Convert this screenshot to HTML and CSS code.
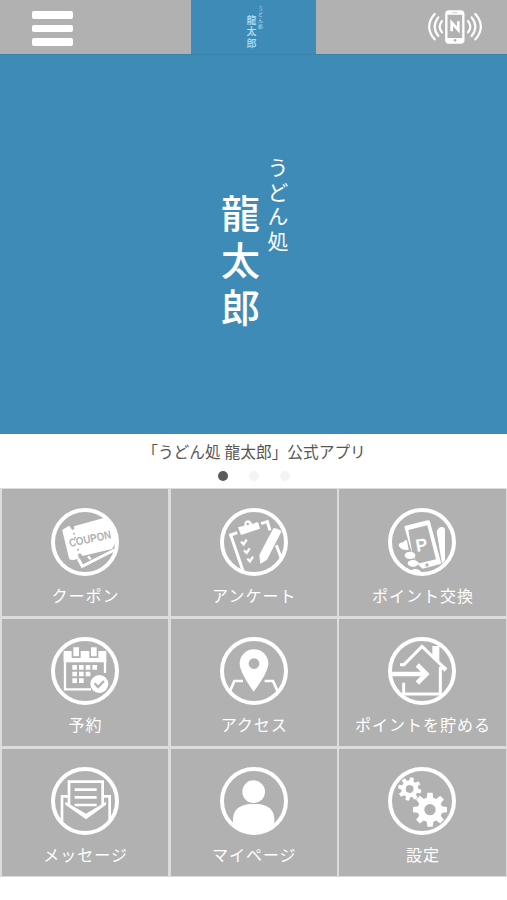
FILE: index.html
```html
<!DOCTYPE html>
<html lang="ja">
	<head>
		<meta charset="utf-8">
		<meta name="viewport" content="width=device-width">
		<title>うどん処 龍太郎</title>
		<link rel="stylesheet" href="styles.css">
	</head>
	<body>
		<header class="header">
			<div class="menu-btn">
				<span></span>
				<span></span>
				<span></span>
			</div>
			<div class="logo logo-small">
				<span class="logo-sub">うどん処</span>
				<span class="logo-name">龍太郎</span>
			</div>
			<svg class="nfc" viewBox="0 0 162 102">
				<rect x="55" y="4" width="51" height="94" rx="8" fill="none" stroke="#fff" stroke-width="7"/>
				<path d="M56 4h49v10H56zM56 84h49v13H56z" fill="#fff"/>
				<path d="M74 8h14" stroke="#b1b1b1" stroke-width="2"/>
				<circle cx="81" cy="91" r="4" fill="#b1b1b1"/>
				<path d="M71 64V38l20 22V34" fill="none" stroke="#fff" stroke-width="8"/>
				<g fill="none" stroke="#fff" stroke-width="6.5" stroke-linecap="round">
					<path d="M42 33q-14 17 0 34M31 22q-22 28 0 56M20 12q-33 38 0 76"/>
					<path d="M120 33q14 17 0 34M131 22q22 28 0 56M142 12q33 38 0 76"/>
				</g>
			</svg>
		</header>

		<section class="slide">
			<div class="logo">
				<span class="logo-sub">うどん処</span>
				<span class="logo-name">龍太郎</span>
			</div>
		</section>
		<section class="caption">
			<p>「うどん処 龍太郎」公式アプリ</p>
			<div class="dots">
				<i class="on"></i>
				<i></i>
				<i></i>
			</div>
		</section>

		<nav class="menu">
			<a class="item">
				<svg class="icon" viewBox="0 0 204 204">
					<circle class="ring" cx="102" cy="102" r="96"/>
					<path class="fill" d="M34 68q0-4 4-5l15-9q4-1 6 5l5 8 6-5-1-7 89-25q36 28 37 68-4 15-12 25L95 144l-7-8-7 3 3 13-17 4-9-1q-3-1-4-5z"/>
					<path class="line" d="M82 153l12 22 96-49"/>
					<path class="line" d="M111 145l8 9" stroke-width="7"/>
					<g class="cut">
						<circle cx="69" cy="77" r="3"/>
						<circle cx="72" cy="89" r="3"/>
						<circle cx="81" cy="125" r="3"/>
					</g>
					<text class="coupon" x="57" y="117" textLength="128" lengthAdjust="spacingAndGlyphs" transform="rotate(-12 57 117)">COUPON</text>
				</svg>
				<span>クーポン</span>
			</a>
			<a class="item">
				<svg class="icon" viewBox="0 0 204 204">
					<circle class="ring" cx="102" cy="102" r="96"/>
					<path class="line" d="M52 74l-20 7 37 107M123 47l19-6 8 26M169 112l16 42"/>
					<path class="fill" d="M54 58l19-5q-1-14 10-16 9-1 13 11l18-6 6 20-57 19z"/>
					<circle class="cut" cx="83" cy="48" r="4"/>
					<path class="line" stroke-width="7" d="M63 101l8 8 9-14M72 127l8 8 9-14M82 152l8 8 9-14"/>
					<path class="fill" d="M160 61q10-2 20 6l4 4-43 84-20 13-3-27z"/>
				</svg>
				<span>アンケート</span>
			</a>
			<a class="item">
				<svg class="icon" viewBox="0 0 204 204">
					<circle class="ring" cx="102" cy="102" r="96"/>
					<path class="fill" d="M49 57q0-3 4-4l66-16q5-1 7 4l34 126-56 15-12-10-4-14-12-8z"/>
					<path class="cut" d="M61 66l57-14 26 102-49 12-9-5-13-24z"/>
					<circle class="cut" cx="117" cy="171" r="5"/>
					<text class="point" x="86" y="132" transform="rotate(-10 86 132)">P</text>
					<g class="fill">
						<path d="M32 112q0-8 14-9 10-16 12 0l4 23q-27 1-30-14z"/>
						<ellipse cx="66" cy="142" rx="16" ry="11"/>
						<ellipse cx="75" cy="166" rx="16" ry="10"/>
						<path d="M66 190q20-18 40 8zM146 71q5-15 17-14 9 1 8 13v87l-9 10z"/>
					</g>
				</svg>
				<span>ポイント交換</span>
			</a>
			<a class="item">
				<svg class="icon" viewBox="0 0 204 204">
					<circle class="ring" cx="102" cy="102" r="96"/>
					<path class="line" stroke-width="7" d="M42 50v107h78M162 65v43"/>
					<path class="fill" d="M38 42h24v21h27V42h26v21h27V42h24v34H38zM67 31h17v27H67zM120 31h17v27h-17z"/>
					<path class="fill" d="M64 84h14v14H64zM84 84h14v14H84zM104 84h14v14h-14zM124 84h14v14h-14zM64 104h14v14H64zM84 104h14v14H84zM104 104h14v14h-14zM64 124h14v14H64zM84 124h14v14H84z"/>
					<circle class="fill" cx="145" cy="141" r="27"/>
					<path class="line cut-line" stroke-width="7" d="M131 139l10 11 18-18"/>
				</svg>
				<span>予約</span>
			</a>
			<a class="item">
				<svg class="icon" viewBox="0 0 204 204">
					<circle class="ring" cx="102" cy="102" r="96"/>
					<path class="fill" fill-rule="evenodd" d="M101 164Q59 106 59 79a43 42 0 0 1 86 0q0 27-44 85zM102 64a16 16 0 1 0 .1 0z"/>
					<path class="line" stroke-width="8" d="M69 132H43l-13 31M134 132h25l14 31"/>
				</svg>
				<span>アクセス</span>
			</a>
			<a class="item">
				<svg class="icon" viewBox="0 0 204 204">
					<circle class="ring" cx="102" cy="102" r="96"/>
					<path class="line" stroke-width="9" d="M36 83h12l54-55 69 67M47 137v34h112M157 89v86"/>
					<path class="line" stroke-width="13" d="M162 89l12 10"/>
					<path class="fill" d="M133 27h21v53l-21-21z"/>
					<path class="line" stroke-width="14" d="M10 111h101M88 84l27 27-27 27"/>
				</svg>
				<span>ポイントを貯める</span>
			</a>
			<a class="item">
				<svg class="icon" viewBox="0 0 204 204">
					<circle class="ring" cx="102" cy="102" r="96"/>
					<path class="line" stroke-width="8" d="M54 116V44h101v72M33 166V88h21M155 88h21v78"/>
					<path class="line" stroke-width="8" d="M71 68h66M71 91h66M71 114h66"/>
					<path class="fill" d="M43 104l62 36 60-36v9l-60 44-62-44z"/>
				</svg>
				<span>メッセージ</span>
			</a>
			<a class="item">
				<svg class="icon" viewBox="0 0 204 204">
					<circle class="ring" cx="102" cy="102" r="96"/>
					<circle class="fill" cx="101" cy="74" r="34"/>
					<path class="fill" d="M39 168v-14q3-39 51-43h24q46 4 49 43v14q-27 30-61 30t-63-30z"/>
				</svg>
				<span>マイページ</span>
			</a>
			<a class="item">
				<svg class="icon" viewBox="0 0 204 204">
					<defs>
						<g id="gear">
							<circle r="27" fill="none" stroke="#fff" stroke-width="20"/>
							<path id="teeth" class="fill" d="M-10-33l2-18H8l2 18zM-10 33l2 18H8l2-18z"/>
							<use href="#teeth" transform="rotate(45)"/>
							<use href="#teeth" transform="rotate(90)"/>
							<use href="#teeth" transform="rotate(135)"/>
						</g>
					</defs>
					<circle class="ring" cx="102" cy="102" r="96"/>
					<use href="#gear" transform="translate(65 66) rotate(12) scale(.68)"/>
					<use href="#gear" transform="translate(126 128)"/>
				</svg>
				<span>設定</span>
			</a>
		</nav>
	</body>
</html>
```
FILE: styles.css
```css
body {
	--gray: #b1b1b1;
	--blue: #3f8bb7;
	margin: 0;
	background: #fff;
	font-family: "Liberation Serif", "Noto Sans CJK JP", serif;
}

.header {
	display: grid;
	grid-template-columns: 191px 125px 1fr;
	height: 55px;
	box-sizing: border-box;
	background: var(--gray);
	border-bottom: 1px solid #3b82ab;
}

.menu-btn {
	display: flex;
	flex-direction: column;
	gap: 6px;
	padding: 11px 0 0 32px;
}

.menu-btn span {
	width: 41px;
	height: 7.6px;
	border-radius: 2px;
	background: #fff;
}

.nfc {
	width: 54px;
	height: 34px;
	margin: 10px 0 0 112px;
}

/* 縦書きロゴ */
.logo {
	writing-mode: vertical-rl;
	display: flex;
	flex-direction: column;
	color: #fff;
	font-family: "Noto Sans CJK JP", sans-serif;
	white-space: nowrap;
}

.logo-sub {
	font-size: 21px;
	line-height: 24px;
	letter-spacing: 3.5px;
}

.logo-name {
	margin-top: 37px;
	margin-right: 2.5px;
	font-size: 39px;
	font-weight: 500;
	line-height: 46px;
	letter-spacing: 8px;
}

.logo-small {
	box-sizing: border-box;
	padding: 6px 52px 0 0;
	background: var(--blue);
	color: #b5e0f3;
}

.logo-small .logo-sub {
	font-size: 5px;
	line-height: 7px;
	letter-spacing: 1px;
}

.logo-small .logo-name {
	margin-top: 9px;
	margin-right: 0;
	font-size: 10px;
	line-height: 12px;
	letter-spacing: 1.6px;
}

.slide {
	height: 379px;
	box-sizing: border-box;
	padding: 102px 217px 0 0;
	background: var(--blue);
	display: flex;
	justify-content: flex-end;
}

.caption {
	height: 54px;
	text-align: center;
}

.caption p {
	margin: 0;
	padding: 6px 0 0 1px;
	font-size: 15.7px;
	line-height: 26px;
	color: #555;
}

.dots {
	display: flex;
	justify-content: center;
	gap: 21px;
	padding-top: 5px;
}

.dots i {
	width: 10px;
	height: 10px;
	border-radius: 50%;
	background: #f4f4f4;
}

.dots .on {
	background: #5b5b5b;
}

.menu {
	display: grid;
	grid-template-columns: repeat(3, 1fr);
	grid-auto-rows: 127.3px;
	gap: 2.6px;
	padding: 1px 1.5px 1px 2px;
	background: #dcdcdc;
}

.item {
	display: flex;
	flex-direction: column;
	align-items: center;
	padding-top: 18.5px;
	box-sizing: border-box;
	background: var(--gray);
	color: #fff;
}

.item span {
	margin-top: 9px;
	padding-left: 1px;
	font-size: 16px;
	line-height: 24px;
	letter-spacing: 1px;
	white-space: nowrap;
}

.icon {
	width: 68px;
	height: 68px;
	flex: none;
	overflow: visible;
}

.ring {
	fill: none;
	stroke: #fff;
	stroke-width: 12;
}

.fill {
	fill: #fff;
}

.cut {
	fill: var(--gray);
}

.line {
	fill: none;
	stroke: #fff;
}

.line:not([stroke-width]) {
	stroke-width: 9;
}

.cut-line {
	stroke: var(--gray);
}

.coupon {
	font: bold 34px "Liberation Sans", sans-serif;
	fill: var(--gray);
}

.point {
	font: bold 53px "Liberation Sans", sans-serif;
	fill: #fff;
}
```
